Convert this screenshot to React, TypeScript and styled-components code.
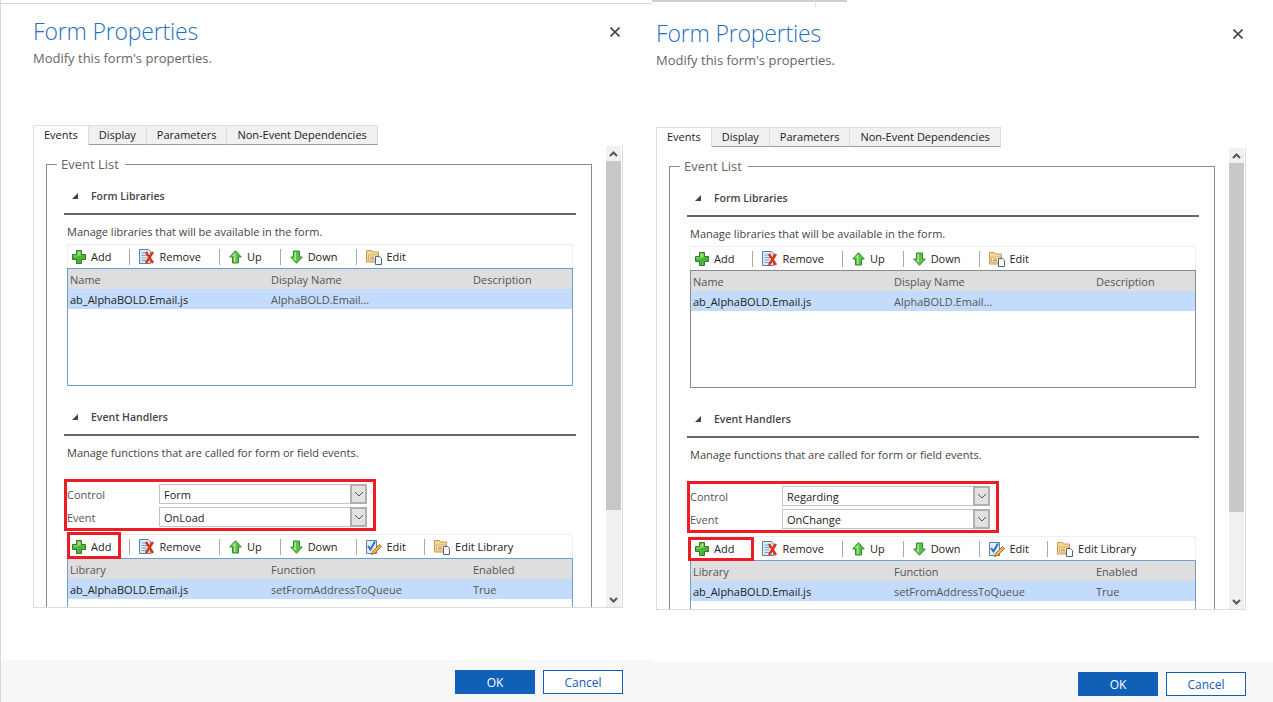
import React from 'react';
import styled, { createGlobalStyle } from 'styled-components';

const GlobalStyle = createGlobalStyle`
  html, body {
    margin: 0;
    padding: 0;
    background: #fff;
    overflow: hidden;
  }
  * { box-sizing: border-box; }
`;

type ToolIcon = 'add' | 'remove' | 'up' | 'down' | 'folder' | 'edit';

type ToolItem = {
  icon: ToolIcon;
  label: string;
};

const AddIcon = () => (
  <svg width="14" height="14" viewBox="0 0 14 14">
    <path d="M4.5.5h5v4h4v5h-4v4h-5v-4h-4v-5h4z" fill="#4fb53a" stroke="#2e7d26" />
    <path d="M5.5 1.5h3v4h-3zM1.5 5.5h4v1h-4z" fill="#9be07f" />
  </svg>
);

const RemoveIcon = () => (
  <svg width="15" height="15" viewBox="0 0 15 15">
    <path d="M.5.5h9l2 2v12h-11z" fill="#dfeaf6" stroke="#5b7fa6" />
    <path d="M2.5 4h6M2.5 6.5h6M2.5 9h5M2.5 11.5h5" stroke="#7f9fc4" />
    <path d="M7 3l7 11M14 3L7 14" stroke="#d8331c" strokeWidth="2.4" />
  </svg>
);

const UpIcon = () => (
  <svg width="13" height="14" viewBox="0 0 13 14">
    <path d="M6.500.7l5.800 6.300H9.500v6h-6V7H.7z" fill="#5cc04a" stroke="#2f8a2c" />
    <path d="M6.500 2.200L3 6h2v6h1.500z" fill="#a8e690" />
  </svg>
);

const DownIcon = () => (
  <svg width="13" height="14" viewBox="0 0 13 14">
    <path d="M6.500 13.300L.7 7h2.800V1h6v6h2.800z" fill="#5cc04a" stroke="#2f8a2c" />
    <path d="M4.500 2h1.500v9L3 8h1.500z" fill="#a8e690" />
  </svg>
);

const FolderIcon = () => (
  <svg width="16" height="16" viewBox="0 0 16 16">
    <path d="M.5 1.500h5l1 1.500h6v10h-12z" fill="#f6d79a" stroke="#c79c55" />
    <path d="M2.500 6h9v5h-9z" fill="#fbeac4" stroke="#d3ac68" />
    <path d="M9.500 7.500h4l2 2v6h-6z" fill="#fff" stroke="#4a6585" />
    <path d="M4 8h4M4 9.500h4" stroke="#c79c55" />
  </svg>
);

const EditIcon = () => (
  <svg width="16" height="16" viewBox="0 0 16 16">
    <path d="M.5 1.500h10v13H.5z" fill="#e6eefa" stroke="#5b7fa6" />
    <path d="M2 7l2.500 3.500L9 2.500" fill="none" stroke="#2d6fc7" strokeWidth="2" />
    <path d="M13.500 5.500l2 2-7 7-3 1 1-3z" fill="#f2b544" stroke="#a8692a" />
  </svg>
);

const icons: Record<ToolIcon, React.ReactElement> = {
  add: <AddIcon />,
  remove: <RemoveIcon />,
  up: <UpIcon />,
  down: <DownIcon />,
  folder: <FolderIcon />,
  edit: <EditIcon />,
};

const libraryTools: ToolItem[] = [
  { icon: 'add', label: 'Add' },
  { icon: 'remove', label: 'Remove' },
  { icon: 'up', label: 'Up' },
  { icon: 'down', label: 'Down' },
  { icon: 'folder', label: 'Edit' },
];

const handlerTools: ToolItem[] = [
  { icon: 'add', label: 'Add' },
  { icon: 'remove', label: 'Remove' },
  { icon: 'up', label: 'Up' },
  { icon: 'down', label: 'Down' },
  { icon: 'edit', label: 'Edit' },
  { icon: 'folder', label: 'Edit Library' },
];

const tabs = ['Events', 'Display', 'Parameters', 'Non-Event Dependencies'];

const Toolbar = ({ items, mark }: { items: ToolItem[]; mark?: string }) => (
  <ToolRow>
    {items.map((item, index) => (
      <React.Fragment key={item.label}>
        {index > 0 && <ToolDivider />}
        <Tool>
          {icons[item.icon]}
          <span>{item.label}</span>
          {index === 0 && mark && <ToolMark $inset={mark} />}
        </Tool>
      </React.Fragment>
    ))}
  </ToolRow>
);

const DataTable = ({ head, row, blue }: { head: string[]; row: string[]; blue: boolean }) => (
  <TableBox $blue={blue}>
    <HeadRow>
      {head.map((text) => (
        <span key={text}>{text}</span>
      ))}
    </HeadRow>
    <BodyRow>
      {row.map((text) => (
        <span key={text}>{text}</span>
      ))}
    </BodyRow>
  </TableBox>
);

const SelectField = ({ label, value }: { label: string; value: string }) => (
  <FieldRow>
    <FieldLabel>{label}</FieldLabel>
    <SelectBox>
      <span>{value}</span>
      <SelectArrow>
        <svg width="10" height="6" viewBox="0 0 10 6">
          <path d="M1 1l4 4 4-4" fill="none" stroke="#555" />
        </svg>
      </SelectArrow>
    </SelectBox>
  </FieldRow>
);

interface FormPanelProps {
  width: number;
  left: number;
  right: number;
  top: number;
  footer: number;
  control: string;
  blueTable: boolean;
  mark: string;
  first?: boolean;
}

const FormPanel = ({ width, left, right, top, footer, control, blueTable, mark, first }: FormPanelProps) => (
  <Panel $width={width} $first={first}>
    <TopEdge $first={first} />
    <PanelBody $left={left} $right={right} $top={top}>
      <Header>
        <div>
          <Title>Form Properties</Title>
          <Subtitle>Modify this form's properties.</Subtitle>
        </div>
        <CloseIcon width="10" height="10" viewBox="0 0 10 10">
          <path d="M.5.5l9 9M9.500.5l-9 9" stroke="#444" strokeWidth="1.600" />
        </CloseIcon>
      </Header>
      <TabStrip>
        {tabs.map((tab, index) => (
          <Tab key={tab} $active={index === 0}>
            {tab}
          </Tab>
        ))}
      </TabStrip>
      <TabContent>
        <ScrollArea>
          <EventList>
            <EventLegend>Event List</EventLegend>
            <SectionHead>
              <Triangle />
              Form Libraries
            </SectionHead>
            <SectionNote>Manage libraries that will be available in the form.</SectionNote>
            <Toolbar items={libraryTools} />
            <DataTable
              head={['Name', 'Display Name', 'Description']}
              row={['ab_AlphaBOLD.Email.js', 'AlphaBOLD.Email...', '']}
              blue={blueTable}
            />
            <HandlersHead>
              <Triangle />
              Event Handlers
            </HandlersHead>
            <SectionNote>Manage functions that are called for form or field events.</SectionNote>
            <ControlBox>
              <SelectField label="Control" value={control} />
              <SelectField label="Event" value={control === 'Form' ? 'OnLoad' : 'OnChange'} />
            </ControlBox>
            <Toolbar items={handlerTools} mark={mark} />
            <DataTable
              head={['Library', 'Function', 'Enabled']}
              row={['ab_AlphaBOLD.Email.js', 'setFromAddressToQueue', 'True']}
              blue
            />
          </EventList>
        </ScrollArea>
        <ScrollBar>
          <ScrollButton>
            <svg width="9" height="6" viewBox="0 0 9 6">
              <path d="M1 5l3.500-3.500L8 5" fill="none" stroke="#555" strokeWidth="2" />
            </svg>
          </ScrollButton>
          <ScrollThumb />
          <ScrollButton>
            <svg width="9" height="6" viewBox="0 0 9 6">
              <path d="M1 1l3.500 3.500L8 1" fill="none" stroke="#555" strokeWidth="2" />
            </svg>
          </ScrollButton>
        </ScrollBar>
      </TabContent>
    </PanelBody>
    <Footer $right={right} $height={footer}>
      <OkButton>OK</OkButton>
      <CancelButton>Cancel</CancelButton>
    </Footer>
  </Panel>
);

const App = () => (
  <>
    <GlobalStyle />
    <Page>
      <FormPanel
        width={652}
        left={32}
        right={29}
        top={8}
        footer={42}
        control="Form"
        blueTable
        mark="-7px -10px -5px -5px"
        first
      />
      <FormPanel
        width={621}
        left={4}
        right={27}
        top={12}
        footer={40}
        control="Regarding"
        blueTable={false}
        mark="-4px -20px -5px -7px"
      />
    </Page>
  </>
);

export default App;

const Page = styled.div`
  display: flex;
  width: 1273px;
  height: 702px;
  font-family: 'Open Sans', 'Noto Sans', sans-serif;
  font-size: 11px;
  color: #222;
`;

const Panel = styled.div<{ $width: number; $first?: boolean }>`
  display: flex;
  flex-direction: column;
  width: ${({ $width }) => $width}px;
  height: 702px;
  border-left: ${({ $first }) => ($first ? '1px solid #d8d8d8' : '0')};
`;

const TopEdge = styled.div<{ $first?: boolean }>`
  position: relative;
  flex: none;
  width: ${({ $first }) => ($first ? '100%' : '195px')};
  height: ${({ $first }) => ($first ? '1px' : '2px')};
  margin-top: ${({ $first }) => ($first ? '3px' : '0')};
  background: ${({ $first }) => ($first ? '#d8d8d8' : '#cfcfcf')};

  ${({ $first }) =>
    !$first &&
    `
    &::after {
      content: '';
      position: absolute;
      left: 163px;
      top: 3px;
      width: 1px;
      height: 4px;
      background: #dddddd;
    }
  `}
`;

const PanelBody = styled.div<{ $left: number; $right: number; $top: number }>`
  flex: 1;
  min-height: 0;
  padding: ${({ $top, $right, $left }) => `${$top}px ${$right}px 0 ${$left}px`};
`;

const Header = styled.div`
  display: flex;
  justify-content: space-between;
  align-items: flex-start;
  height: 109px;
`;

const Title = styled.h1`
  margin: 0;
  font-size: 23px;
  line-height: 38px;
  font-weight: 300;
  letter-spacing: -0.18px;
  color: #1f6fc0;
`;

const Subtitle = styled.p`
  margin: 0;
  font-size: 13px;
  line-height: 16px;
  color: #666;
`;

const CloseIcon = styled.svg`
  margin: 15px 3px 0 0;
`;

const TabStrip = styled.div`
  display: flex;
  align-items: flex-end;
  height: 20px;
  margin-top: 4px;
`;

const Tab = styled.div<{ $active: boolean }>`
  height: 20px;
  padding: 0 10px 2px;
  display: flex;
  align-items: center;
  background: ${({ $active }) => ($active ? '#fff' : '#f0f0f0')};
  border: 1px solid #dcdcdc;
  border-left-width: ${({ $active }) => ($active ? '1px' : '0')};
  border-bottom: ${({ $active }) => ($active ? '0' : '1px solid #9a9aa5')};
  color: #222;
`;

const TabContent = styled.div`
  display: flex;
  height: 463px;
  border: 1px solid #dcdcdc;
  border-top: 0;
  overflow: hidden;
`;

const ScrollArea = styled.div`
  flex: 1;
  min-width: 0;
  padding: 11px 14px 0 12px;
  overflow: hidden;
`;

const EventList = styled.fieldset`
  margin: 0;
  height: 520px;
  padding: 0 15px 0 17px;
  border: 1px solid #8a8a8a;
  border-bottom: 0;
  min-width: 0;
`;

const EventLegend = styled.legend`
  margin-left: -7px;
  padding: 0 6px 0 4px;
  font-size: 13px;
  line-height: 16px;
  color: #666;
`;

const SectionHead = styled.div`
  display: flex;
  align-items: center;
  height: 29px;
  padding: 0 0 7px 8px;
  margin-top: 14px;
  border-bottom: 2px solid #666;
  font-size: 10.5px;
  font-weight: 600;
  color: #444;
`;

const HandlersHead = styled(SectionHead)`
  margin-top: 21px;
`;

const Triangle = styled.i`
  width: 0;
  height: 0;
  margin-right: 13px;
  border-left: 6px solid transparent;
  border-bottom: 6px solid #444;
`;

const SectionNote = styled.p`
  margin: 9px 0 0 3px;
  line-height: 16px;
  color: #444;
`;

const ToolRow = styled.div`
  display: flex;
  align-items: center;
  height: 24px;
  margin: 4px 3px 0 3px;
  padding-left: 4px;
  border: 1px solid #eeeeee;
  border-bottom: 0;
`;

const Tool = styled.div`
  position: relative;
  display: flex;
  align-items: center;
  gap: 5px;
  color: #222;
`;

const ToolMark = styled.i<{ $inset: string }>`
  position: absolute;
  inset: ${({ $inset }) => $inset};
  border: 3px solid #ed1c24;
`;

const ToolDivider = styled.div`
  width: 1px;
  height: 16px;
  margin: 0 9px 0 18px;
  background: #a8a8a8;
`;

const TableBox = styled.div<{ $blue: boolean }>`
  height: 118px;
  margin: 0 3px;
  border: 1px solid ${({ $blue }) => ($blue ? '#6f9fc8' : '#8a8a8a')};
`;

const HeadRow = styled.div`
  display: grid;
  grid-template-columns: 201px 202px 1fr;
  align-items: center;
  height: 20px;
  padding-left: 2px;
  background: #dedede;
  color: #555;
`;

const BodyRow = styled.div`
  display: grid;
  grid-template-columns: 201px 202px 1fr;
  align-items: center;
  height: 20px;
  padding-left: 2px;
  background: #c3dcfd;
  color: #555;

  span:first-child {
    color: #222;
  }
`;

const ControlBox = styled.div`
  display: flex;
  flex-direction: column;
  gap: 3px;
  width: 312px;
  height: 52px;
  margin-top: 18px;
  padding: 2px 6px 0 0;
  border: 3px solid #ed1c24;

  & + ${ToolRow} {
    margin-top: 3px;
  }
`;

const FieldRow = styled.div`
  display: flex;
  align-items: center;
  height: 20px;
`;

const FieldLabel = styled.span`
  width: 92px;
  color: #555;
`;

const SelectBox = styled.div`
  flex: 1;
  display: flex;
  align-items: center;
  justify-content: space-between;
  height: 20px;
  padding-left: 4px;
  border: 1px solid #c4c4c4;
  color: #222;
`;

const SelectArrow = styled.div`
  display: flex;
  align-items: center;
  justify-content: center;
  width: 17px;
  height: 20px;
  margin-right: -1px;
  background: #e2e2e2;
  border: 2px solid #b0b0b0;
`;

const ScrollBar = styled.div`
  display: flex;
  flex-direction: column;
  width: 15px;
  margin: 1px 1px 0 0;
  background: #f0f0f0;
`;

const ScrollButton = styled.div`
  display: flex;
  align-items: center;
  justify-content: center;
  height: 15px;
`;

const ScrollThumb = styled.div`
  height: 349px;
  margin-bottom: auto;
  background: #c8c8c8;
`;

const Footer = styled.div<{ $right: number; $height: number }>`
  flex: none;
  display: flex;
  justify-content: flex-end;
  gap: 8px;
  height: ${({ $height }) => $height}px;
  padding: 10px ${({ $right }) => $right}px 0 0;
  background: #f7f7f7;
`;

const OkButton = styled.button`
  width: 80px;
  height: 24px;
  padding: 0;
  border: 1px solid #1160b7;
  background: #1160b7;
  color: #fff;
  font: 12px 'Open Sans', 'Noto Sans', sans-serif;
`;

const CancelButton = styled(OkButton)`
  background: #fff;
  color: #1160b7;
`;
